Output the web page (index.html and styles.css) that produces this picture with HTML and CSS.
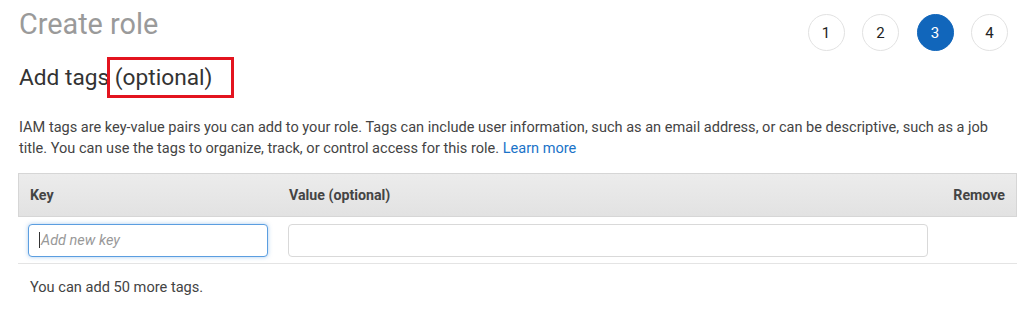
FILE: index.html
```html
<!DOCTYPE html>
<html>
<head>
<meta charset="utf-8">
<link rel="stylesheet" href="styles.css">
</head>
<body>
<div class="page">
  <div class="top">
    <h1 class="title">Create role</h1>
    <div class="steps">
      <span class="step">1</span>
      <span class="step">2</span>
      <span class="step active">3</span>
      <span class="step">4</span>
    </div>
  </div>
  <h2 class="subtitle">Add tags (optional)<span class="mark"></span></h2>
  <p class="desc">IAM tags are key-value pairs you can add to your role. Tags can include user information, such as an email address, or can be descriptive, such as a job title. You can use the tags to organize, track, or control access for this role. <a class="link" href="#">Learn more</a></p>
  <div class="table">
    <div class="thead">
      <div class="th th-key">Key</div>
      <div class="th th-val">Value (optional)</div>
      <div class="th th-rm">Remove</div>
    </div>
    <div class="trow">
      <div class="cell-key"><div class="input focus"><span class="caret"></span><span class="ph">Add new key</span></div></div>
      <div class="cell-val"><div class="input"></div></div>
      <div class="cell-rm"></div>
    </div>
  </div>
  <p class="note">You can add 50 more tags.</p>
</div>
</body>
</html>
```
FILE: styles.css
```css
* { box-sizing: border-box; }
html, body { margin: 0; padding: 0; background: #fff; }
body { font-family: Roboto, "Noto Sans", Arial, sans-serif; color: #444; }
.page { padding: 0 7px 0 18px; }
.top { display: flex; justify-content: space-between; align-items: flex-start; height: 52px; }
.title { margin: 0; padding-top: 5px; font-size: 28.8px; font-weight: 400; color: #9a9a9a; line-height: 38px; padding-left: 1px; }
.steps { display: flex; gap: 17.5px; margin-top: 14px; margin-right: 9px; }
.step { width: 37px; height: 37px; border-radius: 50%; border: 1px solid #e2e2e2; display: flex; align-items: center; justify-content: center; font-size: 15px; color: #222; }
.step.active { background: #1166bb; border-color: #1166bb; color: #fff; }
.subtitle { position: relative; margin: 11px 0 0 1px; font-size: 22.7px; font-weight: 400; color: #333; line-height: 30px; display: inline-block; }
.mark { position: absolute; left: 88px; top: -6px; width: 127px; height: 41px; border: 3px solid #e3141f; }
.desc { margin: 23.5px 0 0 1px; font-size: 14.55px; line-height: 21px; color: #444; }
.link { color: #1a73c8; text-decoration: none; }
.table { margin-top: 14.5px; width: 999px; }
.thead { display: flex; align-items: center; height: 44px; background: linear-gradient(#ececec, #e2e2e2); border: 1px solid #d6d6d6; }
.th { font-size: 14.2px; font-weight: 700; color: #444; }
.th-key { width: 270px; padding-left: 11px; }
.th-val { flex: 1; }
.th-rm { padding-right: 11px; }
.trow { display: flex; align-items: center; height: 47px; border-bottom: 1px solid #e4e4e4; }
.cell-key { width: 270px; padding-left: 10px; }
.cell-val { width: 640px; }
.cell-rm { flex: 1; }
.input { height: 33px; border: 1px solid #d9d9d9; border-radius: 4px; background: #fff; display: flex; align-items: center; }
.cell-key .input { width: 240px; }
.input.focus { border-color: #5b9ee0; box-shadow: 0 0 4px rgba(91, 158, 224, 0.5); padding-left: 10px; }
.caret { width: 1px; height: 16px; background: #333; }
.ph { font-size: 14.5px; font-style: italic; color: #999; margin-left: 1px; }
.note { margin: 13.5px 0 0 12px; font-size: 14.6px; color: #444; }
```
